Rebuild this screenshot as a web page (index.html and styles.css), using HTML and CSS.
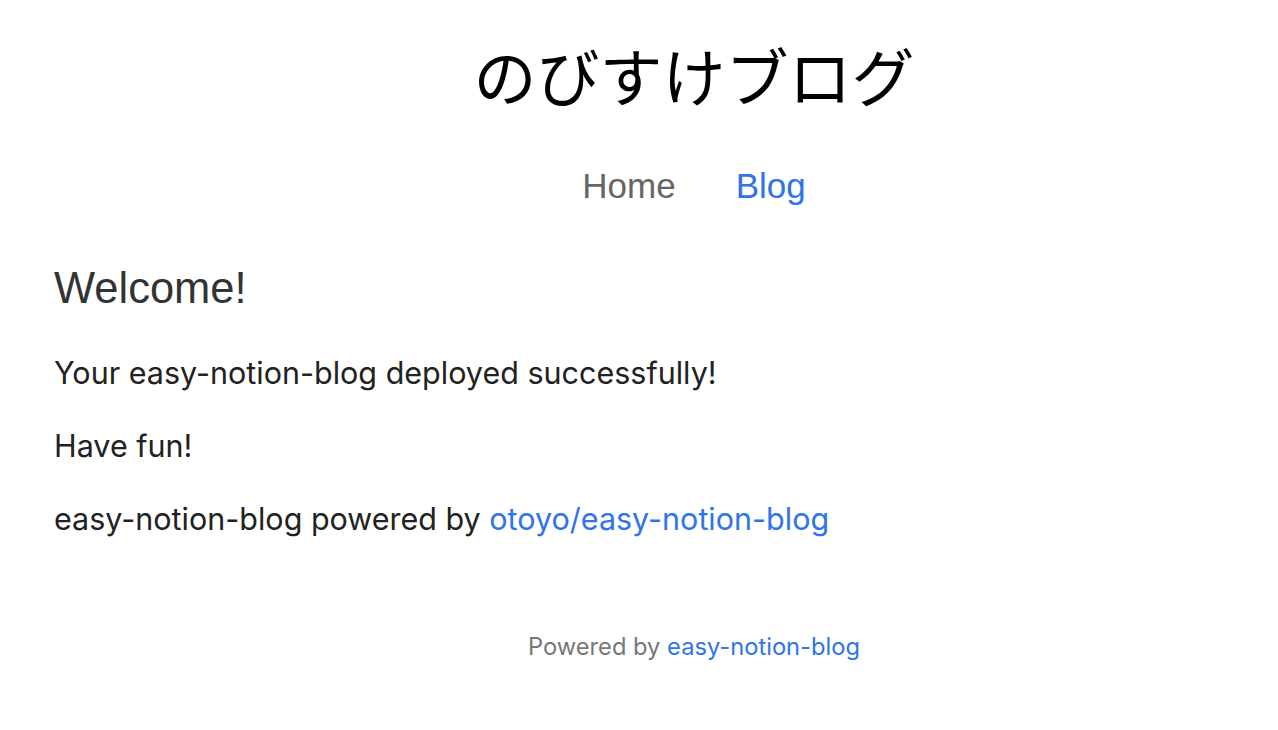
FILE: index.html
```html
<!DOCTYPE html>
<html>
<head>
  <title>のびすけブログ</title>
  <link rel="stylesheet" href="styles.css">
</head>
<body>

  <header class="site-header">
    <h1 class="site-title">のびすけブログ</h1>
    <nav class="site-nav">
      <a href="#" class="nav-link">Home</a>
      <a href="#" class="nav-link active">Blog</a>
    </nav>
  </header>

  <main class="content">
    <h2 class="welcome">Welcome!</h2>
    <p>Your easy-notion-blog deployed successfully!</p>
    <p>Have fun!</p>
    <p>easy-notion-blog powered by <a href="#">otoyo/easy-notion-blog</a></p>
  </main>

  <footer class="site-footer">
    Powered by <a href="#">easy-notion-blog</a>
  </footer>

</body>
</html>
```

FILE: styles.css
```css
body {
  margin: 0;
  font-family: Inter, "Liberation Sans", "Noto Sans CJK JP", sans-serif;
  color: #222;
  background: #fff;
}
a {
  color: #2f74e8;
  text-decoration: none;
}
.site-header {
  padding-left: 110px;
  text-align: center;
}
.site-title {
  margin: 0;
  padding-top: 34px;
  font-family: "Noto Sans CJK JP", sans-serif;
  font-weight: 400;
  font-size: 63px;
  line-height: 80px;
  color: #000;
}
.site-nav {
  margin-top: 50px;
  display: flex;
  justify-content: center;
  gap: 60px;
}
.nav-link {
  font-family: "Liberation Sans", Arial, sans-serif;
  font-size: 35px;
  line-height: 44px;
  color: #666;
}
.nav-link.active {
  color: #2f74e8;
}
.content {
  padding: 0 54px;
  margin-top: 52px;
}
.welcome {
  margin: 0 0 37px;
  font-family: "Liberation Sans", Arial, sans-serif;
  font-weight: 400;
  font-size: 43.5px;
  line-height: 56px;
  color: #333;
}
.content p {
  margin: 0 0 33px;
  font-size: 30.5px;
  line-height: 40px;
}
.site-footer {
  padding-left: 110px;
  margin-top: 93px;
  text-align: center;
  font-size: 23.7px;
  color: #777;
}
```
